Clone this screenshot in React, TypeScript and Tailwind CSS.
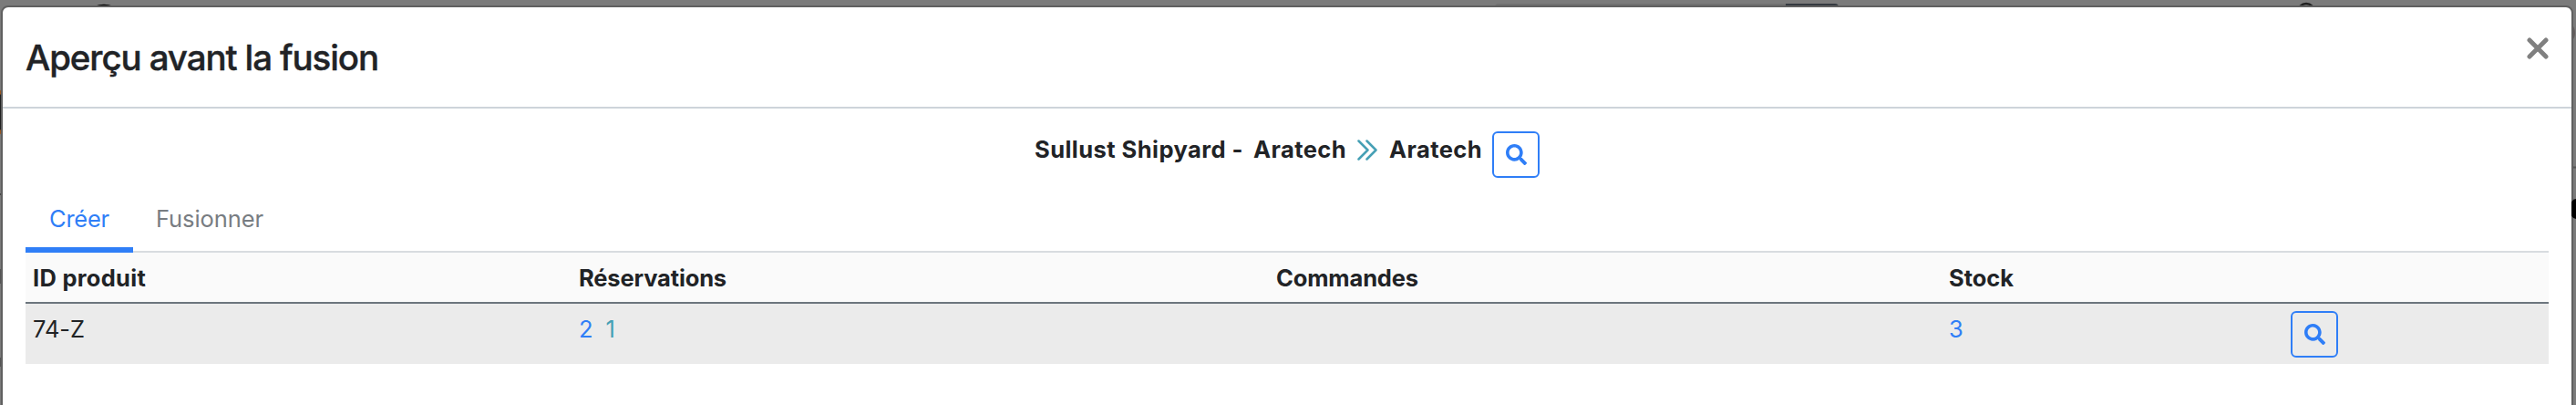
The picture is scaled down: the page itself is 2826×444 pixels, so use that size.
import { ReactNode, useLayoutEffect, useRef, useState } from "react";

/* Text whose tracking is adjusted so that it fills the given width. */
function Fit({ w, children, className = "" }: { w: number; children: string; className?: string }) {
  const ref = useRef<HTMLSpanElement>(null);
  const [spacing, setSpacing] = useState(0);
  useLayoutEffect(() => {
    if (ref.current && children.length > 1) {
      setSpacing((w - ref.current.getBoundingClientRect().width) / children.length);
    }
  }, [w, children]);
  return (
    <span ref={ref} className={"inline-block shrink-0 whitespace-nowrap " + className} style={{ letterSpacing: spacing }}>
      {children}
    </span>
  );
}

function SearchButton() {
  return (
    <button aria-label="Rechercher" className="flex h-[51px] w-[52px] shrink-0 items-center justify-center rounded-[6px] border-2 border-[#2f7ef7] text-[#2f7ef7]">
      <svg viewBox="0 0 512 512" width="23" height="23" fill="currentColor">
        <path d="M505 442.7L405.3 343c-4.500-4.500-10.600-7-17-7H372c27.600-35.300 44-79.700 44-128C416 93.100 322.900 0 208 0S0 93.100 0 208s93.100 208 208 208c48.300 0 92.700-16.400 128-44v16.300c0 6.400 2.500 12.500 7 17l99.700 99.700c9.400 9.400 24.600 9.400 33.900 0l28.300-28.300c9.400-9.400 9.400-24.600.1-34zM208 336c-70.700 0-128-57.200-128-128 0-70.700 57.200-128 128-128 70.700 0 128 57.200 128 128 0 70.700-57.200 128-128 128z" />
      </svg>
    </button>
  );
}

const headers = [
  { label: "ID produit", width: 124 },
  { label: "Réservations", width: 162 },
  { label: "Commandes", width: 156 },
  { label: "Stock", width: 71 },
];

function Cell({ children }: { children?: ReactNode }) {
  return <div className="pl-2 pt-[9px]">{children}</div>;
}

function Backdrop() {
  return (
    <svg className="absolute inset-0" width="2826" height="444">
      <path d="M1640 8q0-4 4-4H1959V8z" fill="#707070" />
      <path d="M1959 4H2013q4 0 4 4H1959z" fill="#343a40" />
      <circle cx="114" cy="30" r="24" fill="none" stroke="#000" strokeWidth="2.500" />
      <circle cx="2530" cy="13" r="9" fill="#7b7b7b" stroke="#202020" strokeWidth="2.500" />
      <path d="M2525 7h10" stroke="#202020" strokeWidth="1.500" />
      <circle cx="24" cy="123" r="32" fill="#202020" stroke="#99551d" strokeWidth="3" />
      <path d="M0 213L3 210V216z" fill="#111" />
      <path d="M0 295H3V311H0zM0 392H3V402H0z" fill="#555" />
      <path d="M2 384h1v3H2z" fill="#111" />
      <circle cx="2812" cy="36" r="12" fill="none" stroke="#625c5c" strokeWidth="2" />
      <path d="M2820 183.500H2826" stroke="#555" strokeWidth="2" />
    </svg>
  );
}

export default function App() {
  return (
    <div className="relative h-[444px] w-[2826px] overflow-hidden bg-[#7b7b7b] pl-px pt-[6px] font-['Inter','Liberation_Sans',sans-serif] text-[25.5px] leading-[38px] text-[#212326]">
      <Backdrop />
      <div className="relative h-[460px] w-[2822px] rounded-t-[8px] border-2 border-[#606060] bg-white">
        <header className="flex h-[111px] justify-between border-b-2 border-[#ced4da] pl-[25px] pr-[25px] pt-[22px]">
          <h1 className="pt-[14px] text-[38.5px] font-medium [-webkit-text-stroke:0.4px_currentColor]">
            <Fit w={387}>Aperçu avant la fusion</Fit>
          </h1>
          <button aria-label="Fermer" className="mt-[11px] h-6 w-6">
            <svg width="24" height="24" viewBox="0 0 24 24" stroke="#808080" strokeWidth="5" strokeLinecap="round">
              <path d="M3 3L21 21M21 3L3 21" />
            </svg>
          </button>
        </header>
        <main className="px-[25px]">
          <div className="flex h-[93px] justify-center pt-[24px] font-bold">
            <Fit w={229} className="pt-[2px]">Sullust Shipyard -</Fit>
            <Fit w={102} className="ml-[11px] pt-[2px]">Aratech</Fit>
            <svg className="ml-[12px] mt-[10px] shrink-0" width="22" height="23" fill="none" stroke="#46a0b5" strokeWidth="2.500" strokeLinecap="round" strokeLinejoin="round">
              <path d="M1.500 1.500L11.500 11.500L1.500 21.500M10.500 1.500L20.500 11.500L10.500 21.500" />
            </svg>
            <Fit w={102} className="ml-[13px] pt-[2px]">Aratech</Fit>
            <div className="ml-[11px] mt-px"><SearchButton /></div>
          </div>
          <nav className="flex h-[65px] border-b-2 border-[#d8dce0]">
            <div className="h-[65px] w-[118px] border-b-6 border-[#2f7ef7] pl-[26px] pt-[9px] text-[#2f7ef7]">
              <Fit w={66}>Créer</Fit>
            </div>
            <div className="pl-[25px] pt-[9px] text-[#787d82]">
              <Fit w={118}>Fusionner</Fit>
            </div>
          </nav>
          <div className="grid h-14 grid-cols-[599px_765px_738px_1fr_291px] border-b-2 border-[#6c757d] bg-[#fafafa] font-bold">
            {headers.map(({ label, width }) => (
              <Cell key={label}><Fit w={width}>{label}</Fit></Cell>
            ))}
          </div>
          <div className="grid h-[66px] grid-cols-[599px_765px_738px_1fr_291px] bg-[#ebebeb]">
            <Cell><Fit w={57}>74-Z</Fit></Cell>
            <Cell>
              <span className="text-[#2f7ef7]">2</span>
              <span className="ml-[14px] text-[#46a0b5]">1</span>
            </Cell>
            <Cell />
            <Cell><span className="text-[#2f7ef7]">3</span></Cell>
            <div className="pl-2 pt-2"><SearchButton /></div>
          </div>
        </main>
      </div>
      <svg className="absolute right-0 top-[216px]" width="5" height="26">
        <ellipse cx="5" cy="13" rx="7" ry="11" fill="#000" />
      </svg>
    </div>
  );
}
